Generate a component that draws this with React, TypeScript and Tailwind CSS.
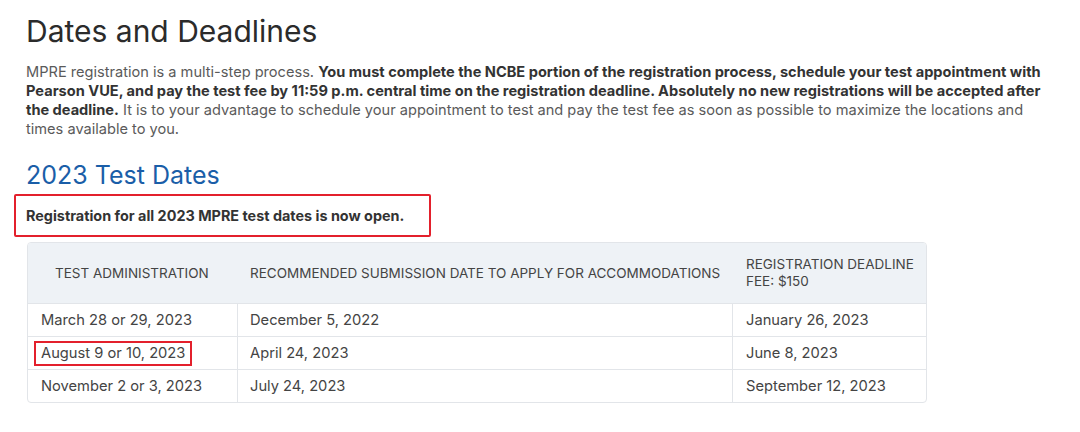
const rows = [
  { admin: "March 28 or 29, 2023", accom: "December 5, 2022", deadline: "January 26, 2023" },
  { admin: "August 9 or 10, 2023", accom: "April 24, 2023", deadline: "June 8, 2023", mark: true },
  { admin: "November 2 or 3, 2023", accom: "July 24, 2023", deadline: "September 12, 2023" },
];

export default function App() {
  return (
    <div className="w-[1080px] h-[432px] bg-white font-['Inter','Liberation_Sans',sans-serif] text-[#555]">
      <div className="pl-[26px] pr-[24px] pt-[12px]">
        <h1 className="text-[30px] leading-[38px] text-[#2b2b2b] font-normal">Dates and Deadlines</h1>

        <p className="mt-[13px] w-[1030px] text-[14.6px] leading-[19px] text-[#5a5a5a]">
          MPRE registration is a multi-step process.{" "}
          <b className="font-bold text-[#333]">
            You must complete the NCBE portion of the registration process, schedule your test appointment with
            Pearson VUE, and pay the test fee by 11:59 p.m. central time on the registration deadline. Absolutely no
            new registrations will be accepted after the deadline.
          </b>{" "}
          It is to your advantage to schedule your appointment to test and pay the test fee as soon as possible to
          maximize the locations and times available to you.
        </p>

        <h2 className="mt-[21px] text-[25px] leading-[30px] text-[#1a5ea8] font-normal">2023 Test Dates</h2>
      </div>

      <div className="ml-[14px] mt-[4px] w-[417px] h-[43px] border-2 border-[#e3202c] rounded-[2px] flex items-center pl-[10px]">
        <span className="text-[14.4px] font-bold text-[#333]">Registration for all 2023 MPRE test dates is now open.</span>
      </div>

      <div className="ml-[27px] mt-[5px] w-[900px] border border-[#e2e5e9] rounded-[4px] overflow-hidden text-[14.7px] text-[#444]">
        <div className="grid grid-cols-[210px_495px_1fr] bg-[#eef2f6] h-[60px] items-center text-[13.5px] uppercase text-[#444]">
          <div className="pl-[27px]">Test Administration</div>
          <div className="pl-[12px]">Recommended Submission Date to Apply for Accommodations</div>
          <div className="pl-[13px] leading-[17px]">
            Registration Deadline
            <br />
            Fee: $150
          </div>
        </div>
        {rows.map((r) => (
          <div key={r.admin} className="grid grid-cols-[210px_495px_1fr] h-[33px] border-t border-[#e2e5e9]">
            <div className="flex items-center pl-[6px] border-r border-[#e2e5e9]">
              <span
                className={
                  r.mark
                    ? "border-2 border-[#e3202c] px-[5px] h-[25px] flex items-center"
                    : "px-[7px]"
                }
              >
                {r.admin}
              </span>
            </div>
            <div className="flex items-center pl-[12px] border-r border-[#e2e5e9]">{r.accom}</div>
            <div className="flex items-center pl-[13px]">{r.deadline}</div>
          </div>
        ))}
      </div>
    </div>
  );
}
